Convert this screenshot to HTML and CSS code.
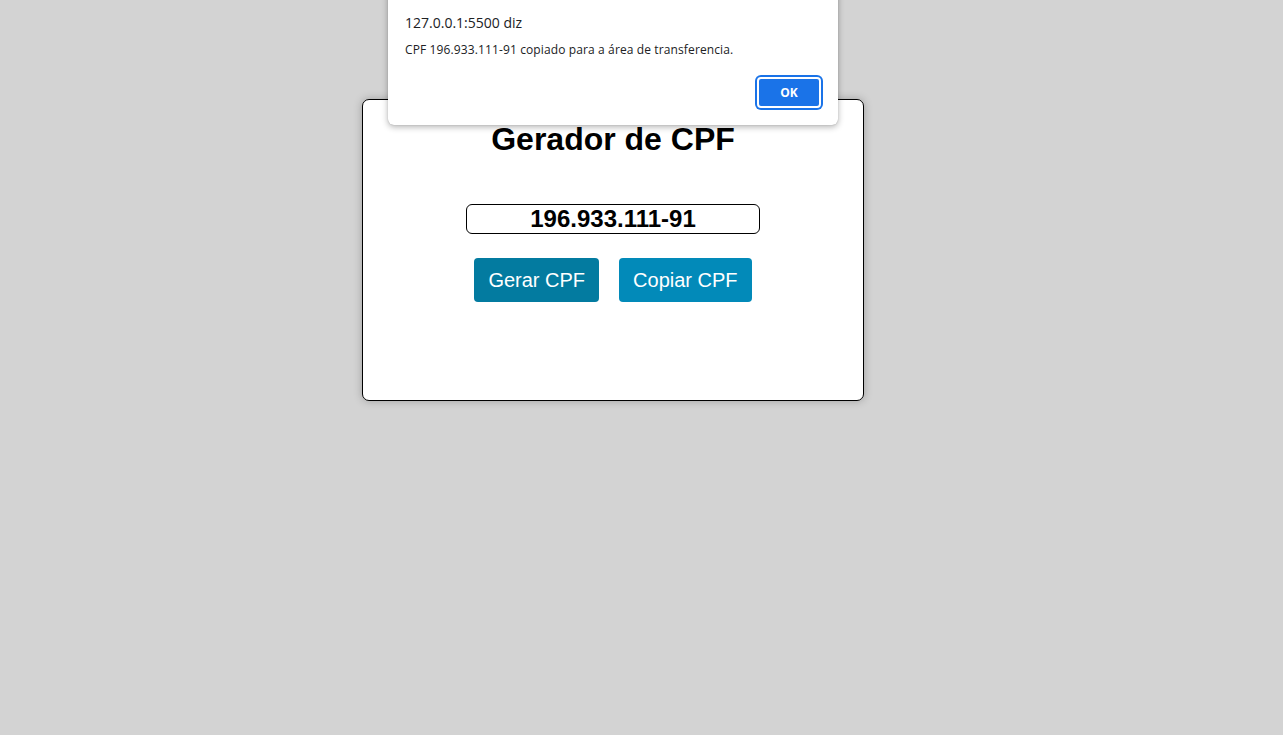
FILE: index.html
```html
<!DOCTYPE html>
<html lang="pt-BR">
<head>
<meta charset="utf-8">
<title>Gerador de CPF</title>
<link rel="stylesheet" href="styles.css">
</head>
<body>
<main class="page">
  <section class="card">
    <h1 class="title">Gerador de CPF</h1>
    <input class="cpf" type="text" value="196.933.111-91" readonly>
    <div class="actions">
      <button class="btn btn-gerar">Gerar CPF</button>
      <button class="btn btn-copiar">Copiar CPF</button>
    </div>
  </section>
</main>
<div class="dialog">
  <p class="dialog-origin">127.0.0.1:5500 diz</p>
  <p class="dialog-msg">CPF 196.933.111-91 copiado para a área de transferencia.</p>
  <div class="dialog-actions">
    <button class="dialog-ok">OK</button>
  </div>
</div>
</body>
</html>
```
FILE: styles.css
```css
html, body {
  margin: 0;
  padding: 0;
  background: #d3d3d3;
  height: 100%;
}
body {
  font-family: "Liberation Sans", Arial, sans-serif;
}
.page {
  padding: 99px 0 0 362px;
}
.card {
  box-sizing: border-box;
  width: 502px;
  height: 302px;
  background: #fff;
  border: 1px solid #000;
  border-radius: 7px;
  box-shadow: 0 0 8px rgba(0, 0, 0, 0.25);
  display: flex;
  flex-direction: column;
  align-items: center;
  padding-top: 21px;
}
.title {
  margin: 0;
  font-size: 32px;
  font-weight: bold;
  color: #000;
  line-height: 37px;
}
.cpf {
  box-sizing: border-box;
  margin-top: 46px;
  width: 294px;
  height: 30px;
  border: 1px solid #000;
  border-radius: 6px;
  font-family: "Liberation Sans", Arial, sans-serif;
  font-size: 24px;
  font-weight: bold;
  text-align: center;
  color: #000;
  padding: 0;
  outline: none;
}
.actions {
  margin-top: 24px;
  display: flex;
  gap: 20px;
}
.btn {
  box-sizing: border-box;
  height: 44px;
  padding: 0 14px;
  border: none;
  border-radius: 4px;
  color: #fff;
  font-family: "Liberation Sans", Arial, sans-serif;
  font-size: 20px;
  line-height: 44px;
}
.btn-gerar {
  background: #037ba0;
}
.btn-copiar {
  background: #028ab9;
}
.dialog {
  position: absolute;
  left: 388px;
  top: -20px;
  width: 450px;
  height: 145px;
  box-sizing: border-box;
  background: #fff;
  border-radius: 6px;
  box-shadow: 0 2px 6px rgba(0, 0, 0, 0.3), 0 0 1px rgba(0,0,0,0.3);
  padding: 32px 16px 0 17px;
  font-family: "Open Sans", "Noto Sans", sans-serif;
  color: #202124;
}
.dialog-origin {
  margin: 0;
  font-size: 14px;
  line-height: 22px;
}
.dialog-msg {
  margin: 8px 0 0;
  font-size: 12px;
  letter-spacing: 0.12px;
  line-height: 16px;
}
.dialog-actions {
  display: flex;
  justify-content: flex-end;
  margin-top: 19px;
}
.dialog-ok {
  box-sizing: border-box;
  width: 64px;
  height: 31px;
  background: #1a73e8;
  color: #fff;
  border: 2px solid #fff;
  border-radius: 4px;
  box-shadow: 0 0 0 2px #1a73e8;
  font-family: "Open Sans", "Noto Sans", sans-serif;
  font-size: 12px;
  font-weight: bold;
  margin-right: 1px;
}
```
